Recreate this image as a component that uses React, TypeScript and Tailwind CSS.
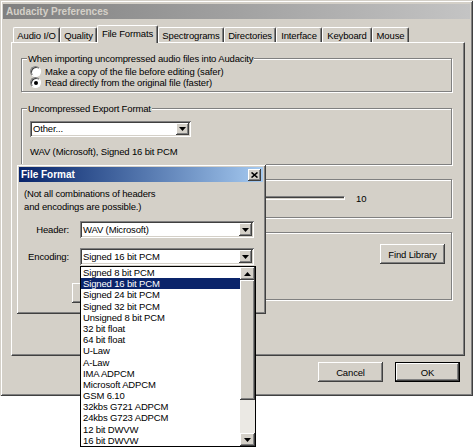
import type React from "react"

// classic 3d borders
const raised = "bg-[#d4d0c8] shadow-[inset_-1px_-1px_0_#404040,inset_1px_1px_0_#fff,inset_-2px_-2px_0_#808080]"
const sunken = "bg-white shadow-[inset_1px_1px_0_#808080,inset_-1px_-1px_0_#fff,inset_2px_2px_0_#404040,inset_-2px_-2px_0_#d4d0c8]"
const frame = "shadow-[inset_1px_1px_0_#d4d0c8,inset_-1px_-1px_0_#404040,inset_2px_2px_0_#fff,inset_-2px_-2px_0_#808080]"

const tabs = [
  { label: "Audio I/O", w: "w-[47px]" },
  { label: "Quality", w: "w-[37px]" },
  { label: "File Formats", w: "w-[61px]", selected: true },
  { label: "Spectrograms", w: "w-[66px]" },
  { label: "Directories", w: "w-[52px]" },
  { label: "Interface", w: "w-[46px]" },
  { label: "Keyboard", w: "w-[50px]" },
  { label: "Mouse", w: "w-[37px]" },
]

const encodings = [
  "Signed 8 bit PCM",
  "Signed 16 bit PCM",
  "Signed 24 bit PCM",
  "Signed 32 bit PCM",
  "Unsigned 8 bit PCM",
  "32 bit float",
  "64 bit float",
  "U-Law",
  "A-Law",
  "IMA ADPCM",
  "Microsoft ADPCM",
  "GSM 6.10",
  "32kbs G721 ADPCM",
  "24kbs G723 ADPCM",
  "12 bit DWVW",
  "16 bit DWVW",
]

function Arrow({ up }: { up?: boolean }) {
  return (
    <svg width="7" height="4" viewBox="0 0 7 4">
      <path d={up ? "M3.5 0L7 4H0z" : "M0 0h7L3.5 4z"} fill="#000" />
    </svg>
  )
}

function Combo({ value, className }: { value: string; className: string }) {
  return (
    <div className={`flex p-[2px] ${sunken} ${className}`}>
      <span className="flex-1 self-center pl-[1px] leading-[12px] truncate">{value}</span>
      <span className={`w-[13px] flex items-center justify-center ${raised}`}>
        <Arrow />
      </span>
    </div>
  )
}

function Radio({ label, checked }: { label: string; checked?: boolean }) {
  return (
    <div className="flex items-center h-[11px] leading-[11px]">
      <span className="w-[11px] h-[11px] rounded-full bg-white border border-[#808080] border-r-white border-b-white shadow-[inset_1px_1px_0_#404040] flex items-center justify-center">
        {checked && <span className="w-[4px] h-[4px] rounded-full bg-black" />}
      </span>
      <span className="ml-[4px]">{label}</span>
    </div>
  )
}

function Button({ label, className, isDefault }: { label?: string; className: string; isDefault?: boolean }) {
  if (isDefault) {
    return (
      <div className={`border border-black ${className}`}>
        <div className={`w-full h-full flex items-center justify-center ${raised}`}>{label}</div>
      </div>
    )
  }
  return <div className={`flex items-center justify-center ${raised} ${className}`}>{label}</div>
}

function Group({ label, className, children }: { label?: string; className: string; children?: React.ReactNode }) {
  return (
    <div className={`w-[431px] border border-[#808080] shadow-[1px_1px_0_#fff,inset_1px_1px_0_#fff] ${className}`}>
      {label ? (
        <div className="-mt-[7px] ml-[5px] px-[1px] w-fit bg-[#d4d0c8] leading-[13px]">{label}</div>
      ) : (
        <div className="h-[6px]" />
      )}
      {children}
    </div>
  )
}

export default function App() {
  return (
    <div className="relative w-[474px] h-[448px] bg-white overflow-hidden font-['Liberation_Sans',Arial,sans-serif] text-[9.5px] tracking-[-0.15px] leading-[13px] text-black">
      {/* Preferences window */}
      <div className={`w-[473px] h-[396px] bg-[#d4d0c8] pt-[4px] px-[3px] flex flex-col ${frame}`}>
        <div className="h-[15px] shrink-0 bg-linear-to-r from-[#808080] to-[#c4c4c4] flex items-center pl-[3px] font-bold text-[10px] tracking-normal text-[#d4d0c8]">
          Audacity Preferences
        </div>

        {/* tabs */}
        <div className="flex items-end h-[17px] mt-[6px] ml-[10px] shrink-0">
          {tabs.map((t) => (
            <div
              key={t.label}
              className={`${t.w} flex items-center justify-center rounded-t-[2px] border-l border-t border-white border-r border-r-[#404040] shadow-[inset_-1px_0_0_#808080] ${
                t.selected ? "relative z-10 h-[18px] -mb-px pb-[3px] bg-[#d4d0c8]" : "h-[15px]"
              }`}
            >
              {t.label}
            </div>
          ))}
        </div>

        {/* tab panel */}
        <div className="ml-[8px] w-[454px] h-[314px] shrink-0 border-l border-t border-white border-r border-b border-r-[#404040] border-b-[#404040] shadow-[inset_-1px_-1px_0_#808080] pt-[15px] pl-[9px] flex flex-col">
          <Group label="When importing uncompressed audio files into Audacity" className="h-[34px]">
            <div className="mt-[1px] pl-[8px] flex flex-col">
              <Radio label="Make a copy of the file before editing (safer)" />
              <Radio checked label="Read directly from the original file (faster)" />
            </div>
          </Group>

          <Group label="Uncompressed Export Format" className="h-[57px] mt-[16px]">
            <Combo value="Other..." className="mt-[6px] ml-[8px] w-[161px] h-[16px]" />
            <div className="mt-[8px] pl-[8px]">WAV (Microsoft), Signed 16 bit PCM</div>
          </Group>

          {/* left part of these two groups sits under the File Format dialog */}
          <Group className="h-[39px] mt-[14px]">
            <div className="mt-[5px] h-[14px] pl-[88px] flex items-center">
              <span className="w-[235px] h-[4px] border border-[#808080] border-r-white border-b-white shadow-[inset_1px_1px_0_#404040]" />
              <span className="ml-[11px]">10</span>
            </div>
          </Group>

          <Group className="h-[68px] mt-[14px]">
            <div className="mt-[5px] pr-[6px] flex items-center justify-end">
              <Button label="Find Library" className="w-[65px] h-[20px]" />
            </div>
          </Group>
        </div>

        <div className="flex justify-end gap-[12px] mt-[6px] pr-[10px]">
          <Button label="Cancel" className="w-[65px] h-[20px]" />
          <Button label="OK" isDefault className="w-[65px] h-[20px]" />
        </div>
      </div>

      {/* File Format dialog */}
      <div className={`absolute left-[16px] top-[164px] w-[250px] h-[150px] bg-[#d4d0c8] p-[3px] flex flex-col ${frame}`}>
        <div className="h-[15px] shrink-0 bg-linear-to-r from-[#0a246a] to-[#a6caf0] flex items-center justify-between pl-[2px] pr-[2px]">
          <span className="font-bold text-white text-[10px] tracking-normal">File Format</span>
          <span className={`w-[13px] h-[12px] flex items-center justify-center ${raised}`}>
            <svg width="7" height="6" viewBox="0 0 7 6">
              <path d="M0.5 0.5L6.5 5.5M6.5 0.5L0.5 5.5" stroke="#000" strokeWidth="1.6" />
            </svg>
          </span>
        </div>

        <div className="mt-[5px] pl-[5px]">
          <div>(Not all combinations of headers</div>
          <div>and encodings are possible.)</div>
        </div>

        <div className="flex items-center mt-[8px]">
          <span className="w-[50px] text-right">Header:</span>
          <Combo value="WAV (Microsoft)" className="ml-[11px] w-[174px] h-[17px]" />
        </div>

        <div className="flex items-center mt-[10px]">
          <span className="w-[50px] text-right">Encoding:</span>
          <div className="relative ml-[11px]">
            <Combo value="Signed 16 bit PCM" className="w-[174px] h-[17px]" />
            {/* open dropdown list */}
            <div className="absolute z-20 left-0 top-[18px] w-[176px] h-[181px] bg-white border border-black flex">
              <div className="w-[159px] flex flex-col overflow-hidden">
                {encodings.map((e) => (
                  <div
                    key={e}
                    className={`h-[11.2px] shrink-0 leading-[11.2px] pl-[2px] whitespace-nowrap ${
                      e === "Signed 16 bit PCM" ? "bg-[#0a246a] text-white" : ""
                    }`}
                  >
                    {e}
                  </div>
                ))}
              </div>
              <div className="w-[15px] flex flex-col">
                <div className={`h-[13px] shrink-0 flex items-center justify-center ${raised}`}>
                  <Arrow up />
                </div>
                <div className={`h-[120px] shrink-0 ${raised}`} />
                <div className="flex-1 bg-[#ebe9e4]" />
                <div className={`h-[13px] shrink-0 flex items-center justify-center ${raised}`}>
                  <Arrow />
                </div>
              </div>
            </div>
          </div>
        </div>

        {/* dialog buttons, mostly hidden by the open list */}
        <div className="flex gap-[14px] mt-[18px] ml-[53px]">
          <Button className="w-[64px] h-[20px]" />
          <Button className="w-[64px] h-[20px]" />
        </div>
      </div>
    </div>
  )
}
